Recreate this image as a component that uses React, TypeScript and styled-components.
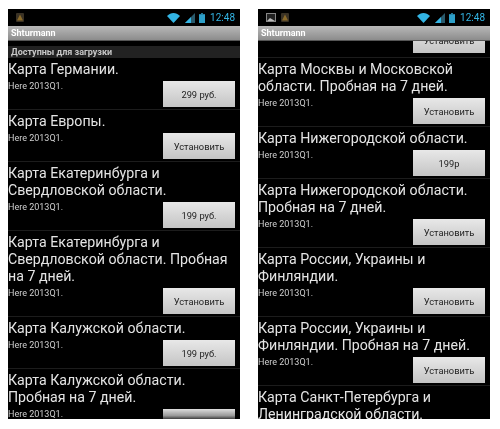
import React from "react";
import styled, { createGlobalStyle } from "styled-components";

const Global = createGlobalStyle`
  html, body { margin: 0; padding: 0; background: #fff; }
  body { font-family: Roboto, "Noto Sans", sans-serif; }
`;
const Page = styled.div`
  width: 500px; height: 429px; box-sizing: border-box; padding: 9px 10px 10px 8px;
  display: flex; gap: 18px; background: #fff; overflow: hidden;
`;
const Phone = styled.div`
  width: 232px; height: 410px; background: #000; display: flex; flex-direction: column; overflow: hidden;
  filter: blur(0.35px);
`;
const StatusBar = styled.div`
  height: 17px; flex: none; box-sizing: border-box; display: flex; align-items: center; padding: 0 5px 0 8px; gap: 5px; background: #000;
`;
const StatusRight = styled.div`
  margin-left: auto; display: flex; align-items: center; gap: 2px;
`;
const Clock = styled.span`
  color: #33b5e5; font-size: 10px; line-height: 16px; margin-left: 3px;
`;
const TitleBar = styled.div`
  height: 15px; flex: none; box-sizing: border-box; padding-left: 3px; font-size: 9px; font-weight: 700; line-height: 15px;
  color: #fff; background: linear-gradient(#b8b8b8, #8c8c8c); border-bottom: 1px solid #555;
`;
const List = styled.div<{ $top?: number }>`
  flex: 1; min-height: 0; overflow: hidden; display: flex; flex-direction: column; padding-top: ${(p) => p.$top ?? 0}px;
`;
const SectionHeader = styled.div`
  height: 12px; flex: none; background: #222; color: #c8c8c8; font-size: 9px; font-weight: 700; line-height: 12px; padding-left: 3px;
`;
const Row = styled.div`
  flex: none; box-sizing: border-box; padding: 2.5px 0 2.5px 0; border-bottom: 1px solid #1c1c1c;
`;
const RowTitle = styled.div`
  color: #e4e4e4; font-size: 14.2px; line-height: 17px; margin-bottom: 3px; white-space: nowrap;
`;
const RowBottom = styled.div`
  display: flex; justify-content: space-between; align-items: flex-start;
`;
const Sub = styled.span`
  color: #d0d0d0; font-size: 9px; line-height: 11px;
`;
const Button = styled.div`
  width: 72px; height: 26px; box-sizing: border-box; margin-right: 5px; flex: none;
  background: linear-gradient(#e8e8e8, #c4c4c4); color: #222; font-size: 9.3px; line-height: 26px; text-align: center; padding-top: 1px;
`;
const ClippedTop = styled.div`
  height: 17px; flex: none; box-sizing: border-box; padding-bottom: 4px; overflow: hidden; display: flex; justify-content: flex-end; align-items: flex-end; border-bottom: 1px solid #1c1c1c;
`;
const ClippedBottom = styled.div`
  height: 11px; overflow: hidden; flex: none;
`;
const FadedButton = styled(Button)`
  height: 11px; line-height: 11px; background: linear-gradient(#ddd, #999 60%, #222);
`;
const WifiIcon = styled.svg`
  width: 13px; height: 10px; flex: none;
`;
const BarsIcon = styled.svg`
  width: 10px; height: 10px; flex: none; margin-left: 3px;
`;
const BatteryIcon = styled.svg`
  width: 6px; height: 10px; flex: none; margin-left: 2px;
`;

const Signal = () => (
  <>
    <WifiIcon viewBox="0 0 13 10"><path d="M0 3 C4 -1 9 -1 13 3 L6.5 10Z" fill="#33b5e5"/></WifiIcon>
    <BarsIcon viewBox="0 0 10 10"><path d="M0 10 L10 0 V10Z" fill="#2a5a6c"/><path d="M0 10 L6 4 V10Z" fill="#33b5e5"/></BarsIcon>
    <BatteryIcon viewBox="0 0 6 10"><rect x="2" y="0" width="2" height="1.2" fill="#2a7a98"/><rect x="0" y="1.2" width="6" height="8.8" fill="#2d9fc8"/></BatteryIcon>
  </>
);
const AppIcon = () => (
  <svg width="8" height="9" viewBox="0 0 8 9"><rect width="8" height="9" rx="1" fill="#3a3225"/><path d="M4 1.5 L7 7.5 H1Z" fill="#8a6a2a"/></svg>
);
const ImageIcon = () => (
  <svg width="10" height="9" viewBox="0 0 10 9"><rect x=".5" y=".5" width="9" height="8" fill="#222" stroke="#888"/><path d="M1 8 L4 5 L9 8Z" fill="#bbb"/></svg>
);

type Item = { title: string[]; action: string };
const Entry = ({ title, action }: Item) => (
  <Row>
    <RowTitle>{title.map((t) => <div key={t}>{t}</div>)}</RowTitle>
    <RowBottom><Sub>Here 2013Q1.</Sub><Button>{action}</Button></RowBottom>
  </Row>
);

const left: Item[] = [
  { title: ["Карта Германии."], action: "299 руб." },
  { title: ["Карта Европы."], action: "Установить" },
  { title: ["Карта Екатеринбурга и", "Свердловской области."], action: "199 руб." },
  { title: ["Карта Екатеринбурга и", "Свердловской области. Пробная", "на 7 дней."], action: "Установить" },
  { title: ["Карта Калужской области."], action: "199 руб." },
];
const right: Item[] = [
  { title: ["Карта Москвы и Московской", "области. Пробная на 7 дней."], action: "Установить" },
  { title: ["Карта Нижегородской области."], action: "199р" },
  { title: ["Карта Нижегородской области.", "Пробная на 7 дней."], action: "Установить" },
  { title: ["Карта России, Украины и", "Финляндии."], action: "Установить" },
  { title: ["Карта России, Украины и", "Финляндии. Пробная на 7 дней."], action: "Установить" },
];

export default function App() {
  return (
    <Page>
      <Global />
      <Phone>
        <StatusBar><AppIcon /><StatusRight><Signal /><Clock>12:48</Clock></StatusRight></StatusBar>
        <TitleBar>Shturmann</TitleBar>
        <List $top={5}>
          <SectionHeader>Доступны для загрузки</SectionHeader>
          {left.map((i) => <Entry key={i.title.join()} {...i} />)}
          <Row>
            <RowTitle><div>Карта Калужской области.</div><div>Пробная на 7 дней.</div></RowTitle>
            <RowBottom><Sub>Here 2013Q1.</Sub><ClippedBottom><FadedButton /></ClippedBottom></RowBottom>
          </Row>
        </List>
      </Phone>
      <Phone>
        <StatusBar><ImageIcon /><AppIcon /><StatusRight><Signal /><Clock>12:48</Clock></StatusRight></StatusBar>
        <TitleBar>Shturmann</TitleBar>
        <List>
          <ClippedTop><Button>Установить</Button></ClippedTop>
          {right.map((i) => <Entry key={i.title.join()} {...i} />)}
          <Row>
            <RowTitle><div>Карта Санкт-Петербурга и</div><div>Ленинградской области.</div></RowTitle>
          </Row>
        </List>
      </Phone>
    </Page>
  );
}
